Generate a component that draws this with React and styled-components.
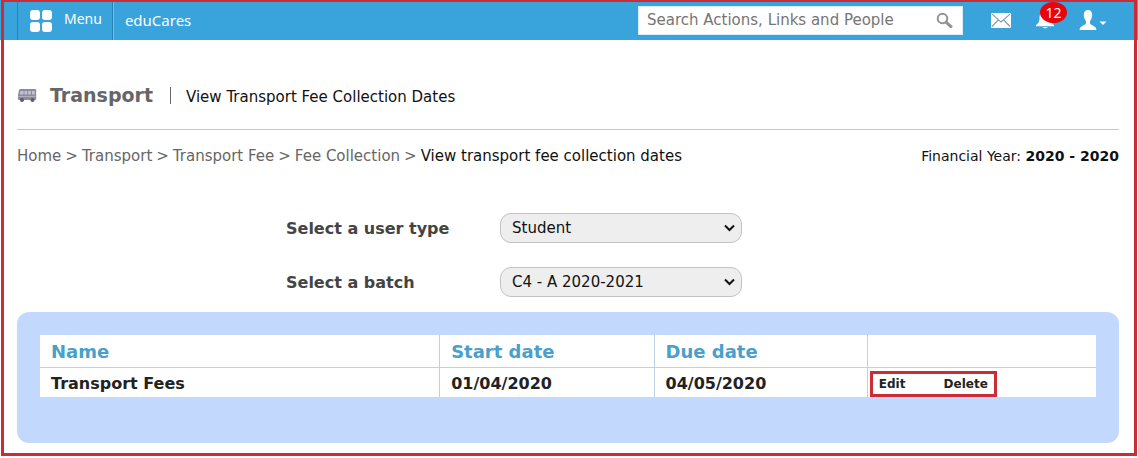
import React from "react";
import styled, { createGlobalStyle } from "styled-components";

const sans = `"DejaVu Sans", Verdana, sans-serif`;
const humanist = `"Noto Sans", Tahoma, sans-serif`;

const GlobalStyle = createGlobalStyle`
  *, *::before, *::after { box-sizing: border-box; }
  html, body, #root { height: 100%; }
  body {
    margin: 0;
    background: #fff;
    color: #111;
    font-family: ${sans};
    font-size: 15px;
  }
  a { color: inherit; text-decoration: none; }
`;

const Page = styled.div`
  position: relative;
  min-height: 100%;
`;

const Frame = styled.div`
  position: absolute;
  inset: 0 1px 2px 1px;
  border: 3px solid #cb2c36;
  border-top-width: 2px;
  pointer-events: none;
`;

const TopBar = styled.header`
  display: flex;
  align-items: center;
  height: 40px;
  padding: 0 31px 0 17px;
  background: #39a3dc;
  color: #fff;
`;

const MenuButton = styled.button`
  display: flex;
  align-items: center;
  gap: 12px;
  height: 40px;
  padding: 0 10px 2px 12px;
  border: 0;
  border-left: 1px solid #2882b5;
  border-right: 1px solid #2882b5;
  box-shadow: 1px 0 #6cc0ec;
  background: none;
  color: #fff;
  font: 14px/20px ${humanist};
`;

const MenuTiles = styled.svg`
  display: block;
  margin-top: 3px;
`;

const Brand = styled.a`
  margin-left: 12px;
  font: 15px/20px ${humanist};
`;

const Search = styled.form`
  display: flex;
  align-items: center;
  width: 325px;
  height: 29px;
  margin-left: auto;
  padding-right: 9px;
  border: 1px solid #d8ecf7;
  background: #fff;
`;

const SearchInput = styled.input`
  flex: 1;
  min-width: 0;
  height: 27px;
  padding: 0 8px;
  border: 0;
  outline: 0;
  background: none;
  color: #444;
  font: 15px/20px ${sans};
  &::placeholder { color: #757575; opacity: 1; }
`;

const IconButton = styled.button`
  position: relative;
  display: flex;
  padding: 0;
  border: 0;
  background: none;
  color: inherit;
`;

const Tools = styled.nav`
  display: flex;
  align-items: center;
  gap: 24px;
  margin-left: 28px;
`;

const Badge = styled.span`
  position: absolute;
  left: 5px;
  top: -10px;
  width: 27px;
  height: 21px;
  border-radius: 50%;
  background: #e8050b;
  color: #fff;
  font: 14px/21px ${humanist};
  text-align: center;
`;

const Main = styled.main`
  padding: 0 19px 15px 17px;
`;

const TitleRow = styled.div`
  display: flex;
  align-items: center;
  height: 90px;
  padding-top: 21px;
  border-bottom: 1px solid #c9c9c9;
`;

const Title = styled.h1`
  margin: 0 0 0 13px;
  color: #666;
  font: bold 19px/24px ${sans};
`;

const Divider = styled.span`
  width: 1px;
  height: 17px;
  margin: 0 15px 0 17px;
  background: #666;
`;

const Subtitle = styled.span`
  padding-top: 3px;
  line-height: 20px;
`;

const TrailRow = styled.div`
  display: flex;
  align-items: center;
  justify-content: space-between;
  height: 52px;
`;

const Trail = styled.nav`
  display: flex;
  gap: 4px;
  color: #666;
  line-height: 20px;
`;

const Current = styled.span`
  color: #111;
`;

const Year = styled.span`
  font-size: 14px;
  line-height: 20px;
`;

const Filters = styled.form`
  display: grid;
  grid-template-columns: 214px 242px;
  row-gap: 24px;
  align-items: center;
  padding: 31px 0 15px 269px;
`;

const Label = styled.label`
  padding-top: 2px;
  color: #444;
  font: bold 16px/20px ${sans};
`;

const SelectBox = styled.span`
  position: relative;
  display: flex;
  align-items: center;
`;

const Select = styled.select`
  appearance: none;
  width: 100%;
  height: 30px;
  padding: 0 30px 0 11px;
  border: 1px solid #c3c3c3;
  border-radius: 11px;
  background: #eee;
  color: #111;
  font: 15px/20px ${sans};
`;

const Chevron = styled.svg`
  position: absolute;
  right: 7px;
  pointer-events: none;
`;

const Panel = styled.section`
  padding: 23px 23px 46px;
  border-radius: 12px;
  background: #c3d8fd;
`;

const Table = styled.table`
  width: 100%;
  border-collapse: separate;
  border-spacing: 0;
  table-layout: fixed;
  background: #fff;
`;

const Col = styled.col`
  width: ${(p) => p.$width};
`;

const HeadCell = styled.th`
  height: 33px;
  padding: 2px 11px 0;
  border-bottom: 1px solid #bdd2e6;
  color: #4a9fcb;
  font: bold 18px/24px ${sans};
  text-align: left;
  & + & { border-left: 1px solid #bdd2e6; }
`;

const Cell = styled.td`
  height: 29px;
  padding: ${(p) => (p.$actions ? "0 2px" : "2px 11px 0")};
  color: #222;
  font: bold 16px/24px ${sans};
  & + & { border-left: 1px solid #bdd2e6; }
`;

const Actions = styled.div`
  display: flex;
  justify-content: space-between;
  width: 127px;
  height: 26px;
  margin-top: 3px;
  padding: 0 6px;
  border: 3px solid #cb2c36;
  font: bold 12px/20px ${sans};
`;

const crumbs = ["Home", "Transport", "Transport Fee", "Fee Collection"];

const filters = [
  { id: "user-type", label: "Select a user type", value: "Student" },
  { id: "batch", label: "Select a batch", value: "C4 - A 2020-2021" },
];

const SearchIcon = () => (
  <svg width="17" height="17" viewBox="0 0 17 17" fill="none" stroke="#929292">
    <circle cx="6.5" cy="6.5" r="4.8" strokeWidth="2" />
    <path d="M10.3 10.3 15 14.6" strokeWidth="3" strokeLinecap="round" />
  </svg>
);

const MailIcon = () => (
  <svg width="20" height="15" viewBox="0 0 20 15">
    <rect width="20" height="15" rx="1" fill="#fff" />
    <path d="M1 1.2 10 9 19 1.2M1 13.5 7.3 7M19 13.5 12.7 7" fill="none" stroke="#7f9fb2" strokeWidth="1.1" />
  </svg>
);

const BellIcon = () => (
  <svg width="20" height="17" viewBox="0 0 20 17" fill="#fff">
    <path d="M10 0C6 0 4.500 2.500 4.500 6 4.500 10 3 11.500 1 13v1.300h18V13c-2-1.500-3.500-3-3.500-7C15.500 2.500 14 0 10 0Z" />
    <path d="M7.500 15.300h5.200c-.5 1.400-4.700 1.400-5.200 0Z" />
  </svg>
);

const UserIcon = () => (
  <svg width="28" height="21" viewBox="0 0 28 21" fill="#fff">
    <path d="M9 0C6.200 0 4.700 2 4.800 5c.1 2.600 1 4.800 2.200 6v2.300C6.500 15.500.8 15.500.5 20h17c-.3-4.500-6-4.500-6.500-6.700V11c1.200-1.200 2.100-3.400 2.200-6C13.300 2 11.800 0 9 0Z" />
    <path d="M20.500 11.500h7L24 15Z" />
  </svg>
);

const BusIcon = () => (
  <svg width="20" height="15" viewBox="0 0 20 15">
    <path d="M3.500 1h14.500q1.200 0 1.200 1.200V11q0 1-1 1H2q-1 0-1-1V7L2 2.300Q2.300 1 3.500 1Z" fill="#8c8c9d" />
    <path d="M3.500 3h3v3.500H2.800ZM7.500 3h2.700v3.500H7.500ZM11.200 3h2.700v3.500h-2.700ZM15 3h2.800v3.500H15Z" fill="#c2c2d2" />
    <path d="M1.500 8.500h17" stroke="#b0b0c0" />
    <circle cx="5" cy="12" r="2" fill="#5d5d6d" />
    <circle cx="15.500" cy="12" r="2" fill="#5d5d6d" />
  </svg>
);

export default function App() {
  return (
    <Page>
      <GlobalStyle />
      <TopBar>
        <MenuButton type="button">
          <MenuTiles width="22" height="22" viewBox="0 0 22 22" fill="#fff">
            <rect width="10" height="10" rx="3" />
            <rect x="12" width="10" height="10" rx="3" />
            <rect y="12" width="10" height="10" rx="3" />
            <rect x="12" y="12" width="10" height="10" rx="3" />
          </MenuTiles>
          Menu
        </MenuButton>
        <Brand href="#">eduCares</Brand>
        <Search role="search">
          <SearchInput aria-label="Search" placeholder="Search Actions, Links and People" />
          <IconButton type="button" aria-label="Search"><SearchIcon /></IconButton>
        </Search>
        <Tools>
          <IconButton type="button" aria-label="Messages"><MailIcon /></IconButton>
          <IconButton type="button" aria-label="Notifications">
            <BellIcon />
            <Badge>12</Badge>
          </IconButton>
          <IconButton type="button" aria-label="Account"><UserIcon /></IconButton>
        </Tools>
      </TopBar>
      <Main>
        <TitleRow>
          <BusIcon />
          <Title>Transport</Title>
          <Divider />
          <Subtitle>View Transport Fee Collection Dates</Subtitle>
        </TitleRow>
        <TrailRow>
          <Trail aria-label="Breadcrumb">
            {crumbs.map((c) => (
              <React.Fragment key={c}>
                <a href="#">{c}</a>
                <span>&gt;</span>
              </React.Fragment>
            ))}
            <Current>View transport fee collection dates</Current>
          </Trail>
          <Year>Financial Year: <b>2020 - 2020</b></Year>
        </TrailRow>
        <Filters>
          {filters.map((f) => (
            <React.Fragment key={f.id}>
              <Label htmlFor={f.id}>{f.label}</Label>
              <SelectBox>
                <Select id={f.id}><option>{f.value}</option></Select>
                <Chevron width="11" height="8" viewBox="0 0 11 8" fill="none" stroke="#111" strokeWidth="2">
                  <path d="M1 1.500 5.500 6 10 1.500" />
                </Chevron>
              </SelectBox>
            </React.Fragment>
          ))}
        </Filters>
        <Panel>
          <Table>
            <colgroup>
              <Col $width="37.8%" />
              <Col $width="20.3%" />
              <Col $width="20.2%" />
              <Col />
            </colgroup>
            <thead>
              <tr>
                <HeadCell>Name</HeadCell>
                <HeadCell>Start date</HeadCell>
                <HeadCell>Due date</HeadCell>
                <HeadCell aria-label="Actions" />
              </tr>
            </thead>
            <tbody>
              <tr>
                <Cell>Transport Fees</Cell>
                <Cell>01/04/2020</Cell>
                <Cell>04/05/2020</Cell>
                <Cell $actions>
                  <Actions>
                    <a href="#">Edit</a>
                    <a href="#">Delete</a>
                  </Actions>
                </Cell>
              </tr>
            </tbody>
          </Table>
        </Panel>
      </Main>
      <Frame />
    </Page>
  );
}
